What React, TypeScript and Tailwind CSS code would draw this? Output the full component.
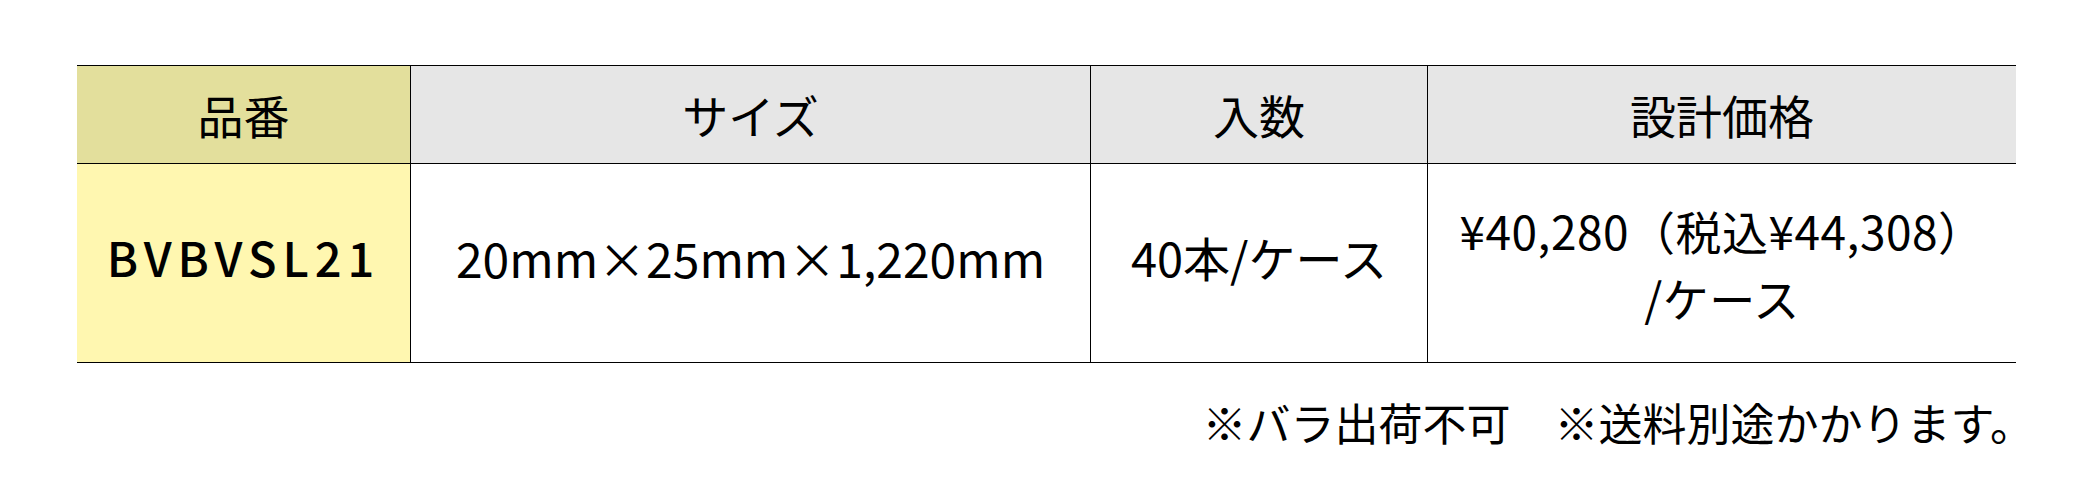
const headers = ["品番", "サイズ", "入数", "設計価格"];

export default function App() {
  return (
    <div className="w-[2090px] h-[500px] bg-white text-black font-['Noto_Sans_CJK_JP','Noto_Sans',sans-serif]">
      <div className="pt-[65px] pl-[77px] w-[2016px]">
        <div className="grid grid-cols-[333px_680px_337px_589px] border-t border-b border-black">
          {headers.map((h, i) => (
            <div
              key={h}
              className={
                "h-[98px] flex items-center justify-center text-[46px] border-b border-black " +
                (i === 0 ? "bg-[#e3df9c]" : "bg-[#e6e6e6] border-l")
              }
            >
              {h}
            </div>
          ))}
          <div className="h-[198px] flex items-center justify-center pb-[12px] bg-[#fff7b0] text-[47px] font-medium tracking-[6px]">
            BVBVSL21
          </div>
          <div className="h-[198px] flex items-center justify-center pb-[12px] border-l border-black text-[48px]">
            20mm×25mm×1,220mm
          </div>
          <div className="h-[198px] flex items-center justify-center pb-[12px] border-l border-black text-[47px]">
            40本/ケース
          </div>
          <div className="h-[198px] flex flex-col items-center justify-center border-l border-black text-[46px] leading-[67px] tracking-[0.5px] pt-[2px]">
            <p>¥40,280（税込¥44,308）</p>
            <p>/ケース</p>
          </div>
        </div>
        <p className="mt-[34px] -mr-[18px] text-right text-[44px] leading-[50px]">
          ※バラ出荷不可　※送料別途かかります。
        </p>
      </div>
    </div>
  );
}
